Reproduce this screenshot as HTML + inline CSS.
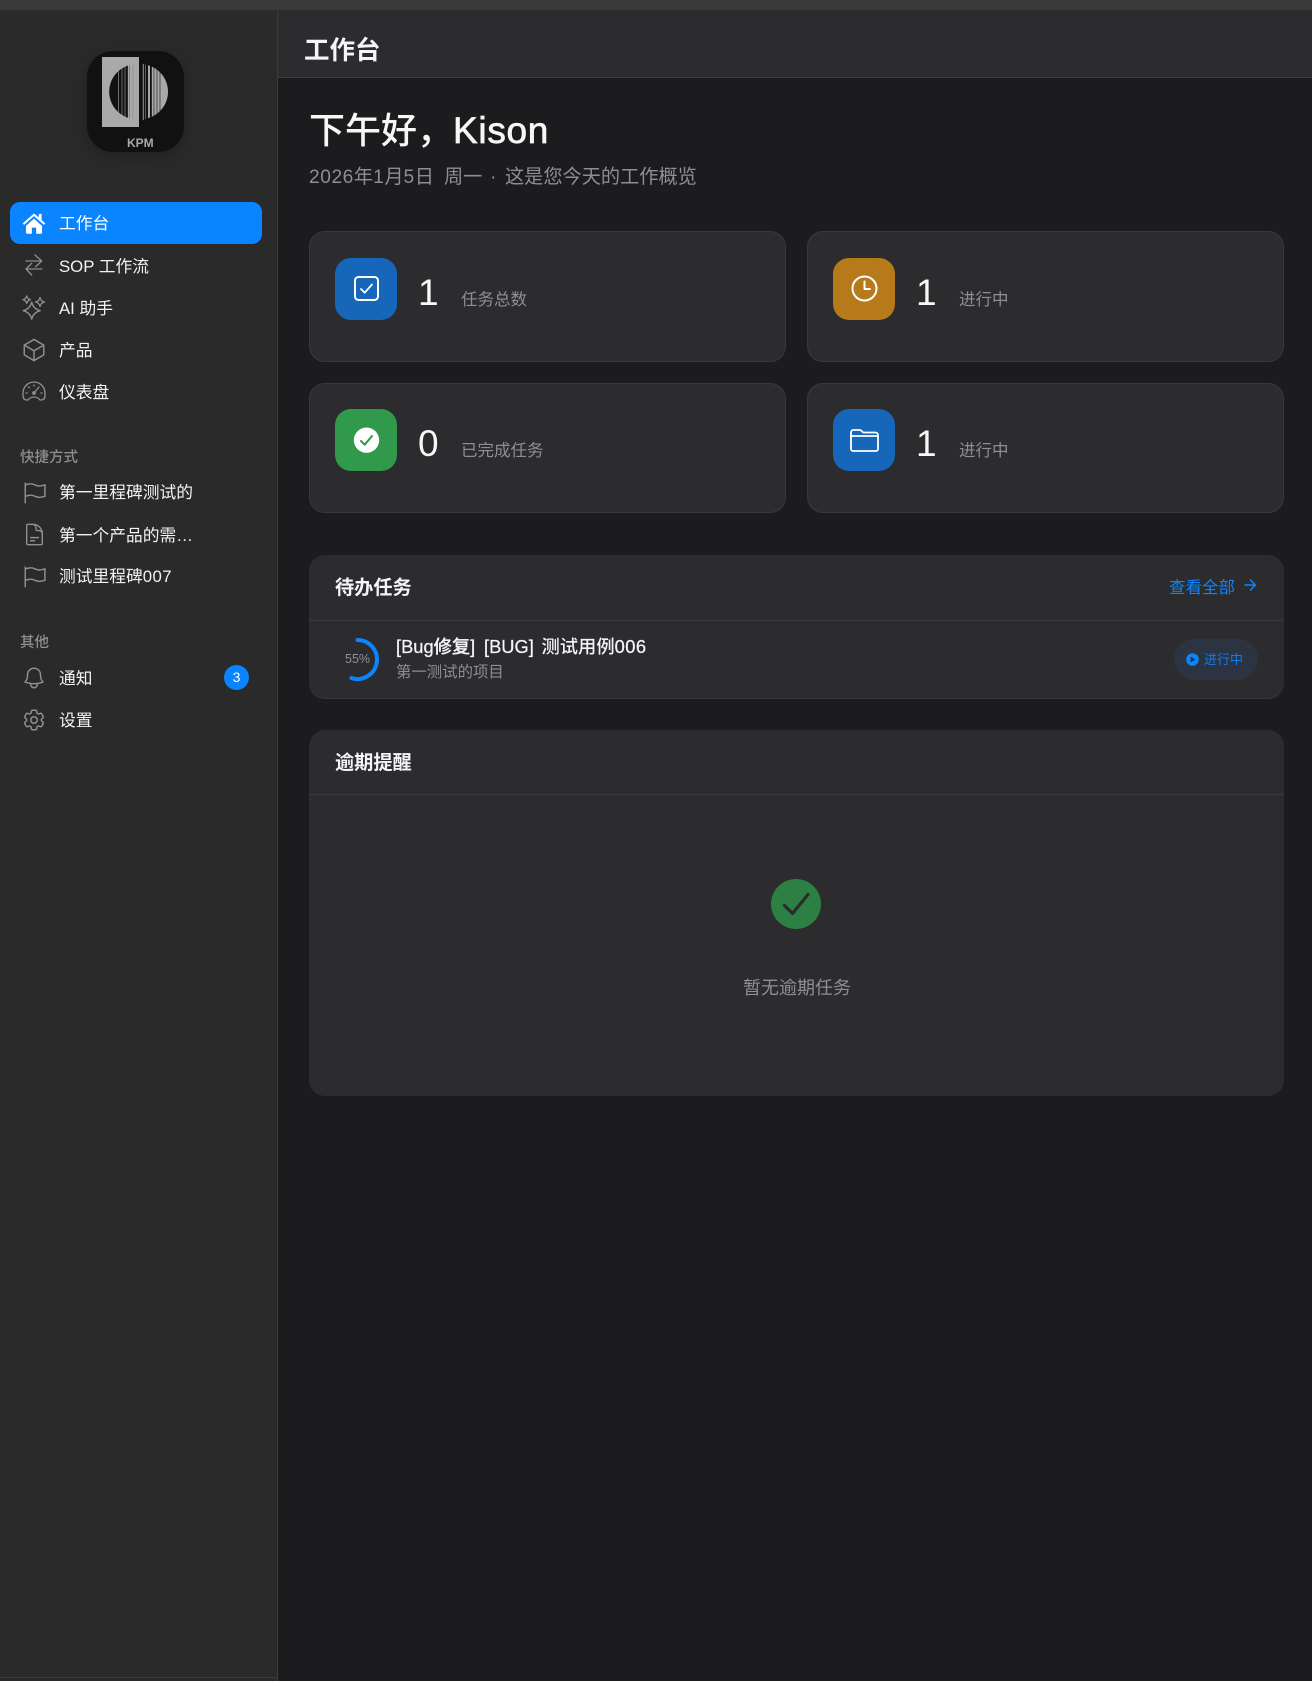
<!DOCTYPE html>
<html lang="zh"><head><meta charset="utf-8"><title>工作台</title>
<style>
*{box-sizing:border-box;margin:0;padding:0}
html,body{width:1312px;height:1681px;overflow:hidden;background:#1c1c1e}
body{position:relative;font-family:"Liberation Sans","Noto Sans CJK SC",sans-serif;color:#fff}
.a{position:absolute}
.t{position:absolute;white-space:nowrap;line-height:30px;height:30px}
.nav{font-size:16.75px;color:#f2f2f7;left:59px}
.sec{font-size:14.5px;color:#8e8e93;left:20px;font-weight:500}
.card{position:absolute;background:#2c2c2e;border:1px solid #39393b;border-radius:16px;width:477px;height:131px}
.tile{position:absolute;width:62px;height:62px;border-radius:16px}
.num{font-size:37px;color:#f8f8f8}
.lab{font-size:16.5px;color:#8e8e93}
svg.i{position:absolute;width:26px;height:26px;left:21px;fill:none;stroke:#8e8e93;stroke-width:1.35;stroke-linecap:round;stroke-linejoin:round}
svg.w{position:absolute;fill:none;stroke:#fff;stroke-width:2;stroke-linecap:round;stroke-linejoin:round}
.lat{letter-spacing:.45px}
.med{-webkit-text-stroke:.25px #f5f5f7}
</style></head><body>
<div class="a" style="left:0;top:0;width:1312px;height:10px;background:#3a3a3a"></div>
<div class="a" style="left:0;top:10px;width:278px;height:1671px;background:#2a2a2a;border-right:1px solid #3a3a3c"></div>
<div class="a" style="left:0;top:1677px;width:277px;height:1px;background:#3a3a3c"></div>
<div class="a" style="left:278px;top:10px;width:1034px;height:68px;background:#2c2c2e;border-bottom:1px solid #3f3f41"></div>

<div class="a" style="left:87px;top:51px;width:97px;height:101px;border-radius:26px;background:#111;box-shadow:0 4px 14px rgba(0,0,0,.25)"></div>
<svg class="a" style="left:87px;top:51px;filter:blur(.35px)" width="97" height="101" viewBox="0 0 97 101">
<defs>
<clipPath id="lh"><rect x="15" y="0" width="27.300" height="90"/></clipPath>
<clipPath id="rh"><rect x="53.500" y="0" width="30" height="90"/></clipPath>
</defs>
<rect x="15" y="6" width="37" height="70" fill="#a9a9a9"/>
<circle cx="49.700" cy="40.700" r="27.500" fill="#111" clip-path="url(#lh)"/>
<g clip-path="url(#lh)"><g stroke="#a9a9a9" stroke-width=".6"><path d="M31.500 13v56M35 13v56M38 13v56"/></g><path d="M41.500 13v56" stroke="#a9a9a9" stroke-width="1.300"/></g>
<path d="M46 13v56" stroke="#8d8d8d" stroke-width=".6"/>
<circle cx="53.500" cy="40.700" r="27.500" fill="#a9a9a9" clip-path="url(#rh)"/>
<rect x="53.500" y="12" width="5" height="58" fill="#111"/>
<rect x="55.800" y="13" width=".9" height="56" fill="#a9a9a9"/>
<rect x="59" y="13" width="2" height="56" fill="#111"/>
<rect x="63" y="13" width="1.800" height="56" fill="#111"/>
<g stroke="#111" stroke-width=".6"><path d="M67 13v56M70 13v56M73 13v56"/></g>
<text x="40" y="96" font-size="12" font-weight="700" fill="#a9a9a9" font-family="Liberation Sans">KPM</text>
</svg>

<div class="a" style="left:9.5px;top:202px;width:252px;height:42px;background:#0a84ff;border-radius:10px"></div>
<svg class="a" style="left:21px;top:210px" width="26" height="26" viewBox="0 0 24 24" fill="#fff"><path d="M12 3.200 1.600 12.400l1.200 1.300L12 5.600l9.200 8.100 1.200-1.300-3.400-3V3.600h-2.600v3.200z"/><path d="M4.600 14.600 12 8l7.400 6.600V21a.9.9 0 0 1-.9.9H14v-5.600h-4v5.600H5.500a.9.9 0 0 1-.9-.9z"/></svg>
<div class="t nav" style="top:209px;color:#fff">工作台</div>

<svg class="i" style="top:253px" viewBox="0 0 26 26"><path d="M5 8h15.700M14 2l6.700 6-6 5.700M5 16h15.700M10.700 10.300 5 16l5.700 6"/></svg>
<div class="t nav" style="top:252px">SOP 工作流</div>

<svg class="i" style="top:295px" viewBox="0 0 26 26"><path d="M10.700 7.200Q12.300 14 19.200 15.700 12.300 17.400 10.700 24.200 9.100 17.400 2.200 15.700 9.100 14 10.700 7.200Z"/><path d="M5.700 1Q6.300 4 9.400 4.700 6.300 5.400 5.700 8.400 5.100 5.400 2 4.700 5.100 4 5.700 1Z"/><path d="M19 2.500Q19.700 6.200 23.500 7 19.700 7.800 19 11.500 18.300 7.800 14.500 7 18.300 6.200 19 2.500Z"/></svg>
<div class="t nav" style="top:294px">AI 助手</div>

<svg class="i" style="top:336.500px" viewBox="0 0 24 24"><path d="m21 7.500-9-5.250L3 7.500m18 0-9 5.250m9-5.250v9l-9 5.250M3 7.500l9 5.250M3 7.500v9l9 5.250m0-9v9"/></svg>
<div class="t nav" style="top:336px">产品</div>

<svg class="i" style="top:379px" viewBox="0 0 26 26"><path d="M7 21H6C3.500 21 2 19.500 2 16.500V14A11 11 0 0 1 24 14V16.500C24 19.500 22.500 21 20 21H19C17.500 19 15.500 18 13 18C10.500 18 8.500 19 7 21Z"/><path d="M13 14 18 8M13 6v1M7.500 8l.8.8M5 14h1.200M20 14h1"/><circle cx="13" cy="14" r="1.200"/></svg>
<div class="t nav" style="top:378px">仪表盘</div>

<div class="t sec" style="top:443px">快捷方式</div>
<svg class="i" style="top:479.500px;left:22px" viewBox="0 0 24 24"><path d="M3 3v1.500M3 21v-6m0 0 2.770-.693a9 9 0 0 1 6.208.682l.108.054a9 9 0 0 0 6.086.710l3.114-.732a48.524 48.524 0 0 1-.005-10.499l-3.110.732a9 9 0 0 1-6.085-.711l-.108-.054a9 9 0 0 0-6.208-.682L3 4.500M3 15V4.500"/></svg>
<div class="t nav" style="top:478px">第一里程碑测试的</div>
<svg class="i" style="top:522px;left:22px;width:25px;height:25px" viewBox="0 0 24 24"><path d="M19.500 14.250v-2.625a3.375 3.375 0 0 0-3.375-3.375h-1.500A1.125 1.125 0 0 1 13.500 7.125v-1.500a3.375 3.375 0 0 0-3.375-3.375H8.250m0 12.750h7.500m-7.500 3H12M10.500 2.250H5.625c-.621 0-1.125.504-1.125 1.125v17.250c0 .621.504 1.125 1.125 1.125h12.750c.621 0 1.125-.504 1.125-1.125V11.250a9 9 0 0 0-9-9Z"/></svg>
<div class="t nav" style="top:521px">第一个产品的需…</div>
<svg class="i" style="top:563.500px;left:22px" viewBox="0 0 24 24"><path d="M3 3v1.500M3 21v-6m0 0 2.770-.693a9 9 0 0 1 6.208.682l.108.054a9 9 0 0 0 6.086.710l3.114-.732a48.524 48.524 0 0 1-.005-10.499l-3.110.732a9 9 0 0 1-6.085-.711l-.108-.054a9 9 0 0 0-6.208-.682L3 4.500M3 15V4.500"/></svg>
<div class="t nav" style="top:562px">测试里程碑<span class="lat">007</span></div>

<div class="t sec" style="top:628px">其他</div>
<svg class="i" style="top:664.500px" viewBox="0 0 24 24"><path d="M14.857 17.082a23.848 23.848 0 0 0 5.454-1.310A8.967 8.967 0 0 1 18 9.750V9A6 6 0 0 0 6 9v.750a8.967 8.967 0 0 1-2.312 6.022c1.733.640 3.560 1.085 5.455 1.310m5.714 0a24.255 24.255 0 0 1-5.714 0m5.714 0a3 3 0 1 1-5.714 0"/></svg>
<div class="t nav" style="top:664px">通知</div>
<div class="a" style="left:224px;top:664.500px;width:25px;height:25px;border-radius:50%;background:#0a84ff;font-size:14px;line-height:25px;text-align:center;font-weight:500">3</div>
<svg class="i" style="top:707px" viewBox="0 0 24 24"><path d="M9.594 3.940c.090-.542.560-.940 1.110-.940h2.593c.550 0 1.020.398 1.110.940l.213 1.281c.063.374.313.686.645.870.074.040.147.083.220.127.325.196.720.257 1.075.124l1.217-.456a1.125 1.125 0 0 1 1.370.490l1.296 2.247a1.125 1.125 0 0 1-.260 1.431l-1.003.827c-.293.241-.438.613-.430.992a7.723 7.723 0 0 1 0 .255c-.008.378.137.750.430.991l1.004.827c.424.350.534.955.260 1.430l-1.298 2.247a1.125 1.125 0 0 1-1.369.491l-1.217-.456c-.355-.133-.750-.072-1.076.124a6.470 6.470 0 0 1-.220.128c-.331.183-.581.495-.644.869l-.213 1.281c-.090.543-.560.940-1.110.940h-2.594c-.550 0-1.019-.398-1.110-.940l-.213-1.281c-.062-.374-.312-.686-.644-.870a6.520 6.520 0 0 1-.220-.127c-.325-.196-.720-.257-1.076-.124l-1.217.456a1.125 1.125 0 0 1-1.369-.490l-1.297-2.247a1.125 1.125 0 0 1 .260-1.431l1.004-.827c.292-.240.437-.613.430-.991a6.932 6.932 0 0 1 0-.255c.007-.380-.138-.751-.430-.992l-1.004-.827a1.125 1.125 0 0 1-.260-1.430l1.297-2.247a1.125 1.125 0 0 1 1.370-.491l1.216.456c.356.133.751.072 1.076-.124.072-.044.146-.086.220-.128.332-.183.582-.495.644-.869l.214-1.280Z"/><path d="M15 12a3 3 0 1 1-6 0 3 3 0 0 1 6 0Z"/></svg>
<div class="t nav" style="top:706px">设置</div>

<div class="t" style="left:304px;top:36px;font-size:25.5px;font-weight:600;line-height:30px;color:#f5f5f7">工作台</div>
<div class="t" style="left:309px;top:116px;font-size:36px;font-weight:500;line-height:30px;color:#f7f7f7">下午好，<span style="-webkit-text-stroke:.7px #f7f7f7;letter-spacing:.7px;font-size:37px">Kison</span></div>
<div class="t" style="left:309px;top:163px;font-size:19.2px;color:#8e8e93"><span style="letter-spacing:.55px">2026</span>年<span style="letter-spacing:.55px">1</span>月<span style="letter-spacing:.55px">5</span>日</div>
<div class="t" style="left:444px;top:163px;font-size:19.2px;color:#8e8e93">周一</div>
<div class="t" style="left:490px;top:163px;font-size:19.2px;color:#8e8e93">·</div>
<div class="t" style="left:505px;top:163px;font-size:19.2px;color:#8e8e93">这是您今天的工作概览</div>

<div class="card" style="left:309px;top:231px"></div>
<div class="tile" style="left:335px;top:258px;background:#1666ba"></div>
<svg class="w" style="left:353px;top:275px" width="27" height="27" viewBox="0 0 27 27"><rect x="2" y="2" width="23" height="23" rx="3.500" stroke-width="2"/><path d="M8 14l3.700 3.700L19 9.500" stroke-width="1.800"/></svg>
<div class="t num" style="left:418px;top:278px">1</div>
<div class="t lab" style="left:461px;top:285px">任务总数</div>

<div class="card" style="left:807px;top:231px"></div>
<div class="tile" style="left:833px;top:258px;background:#b67a1a"></div>
<svg class="w" style="left:851px;top:275px" width="27" height="27" viewBox="0 0 27 27"><circle cx="13.500" cy="13.500" r="12" stroke-width="2"/><path d="M13.500 6.500v7.500h5.500" stroke-width="2"/></svg>
<div class="t num" style="left:916px;top:278px">1</div>
<div class="t lab" style="left:959px;top:285px">进行中</div>

<div class="card" style="left:309px;top:383px;height:130px"></div>
<div class="tile" style="left:335px;top:409px;background:#30994b"></div>
<svg class="a" style="left:353px;top:427px" width="27" height="27" viewBox="0 0 27 27"><circle cx="13.500" cy="13.200" r="12.700" fill="#fff"/><path d="M8 14l3.700 3.700L19 9" fill="none" stroke="#30994b" stroke-width="2" stroke-linecap="round" stroke-linejoin="round"/></svg>
<div class="t num" style="left:418px;top:429px">0</div>
<div class="t lab" style="left:461px;top:436px">已完成任务</div>

<div class="card" style="left:807px;top:383px;height:130px"></div>
<div class="tile" style="left:833px;top:409px;background:#1666ba"></div>
<svg class="w" style="left:849px;top:427px" width="31" height="27" viewBox="0 0 31 27"><path d="M2 5.500A2.500 2.500 0 0 1 4.500 3h6c1 0 1.800.400 2.500 1.200l1 1.300h12.500A2.500 2.500 0 0 1 29 8v14a2 2 0 0 1-2 2H4a2 2 0 0 1-2-2z" stroke-width="1.800"/><path d="M2 9h27" stroke-width="1.800"/></svg>
<div class="t num" style="left:916px;top:429px">1</div>
<div class="t lab" style="left:959px;top:436px">进行中</div>

<div class="a" style="left:309px;top:555px;width:975px;height:144px;background:#2c2c2e;border-radius:16px;border-bottom:1px solid #38383a"></div>
<div class="a" style="left:309px;top:620px;width:975px;height:1px;background:#3a3a3c"></div>
<div class="t" style="left:335px;top:574px;font-size:19.2px;font-weight:600;color:#f5f5f7">待办任务</div>
<div class="t" style="left:1169px;top:573px;font-size:16.5px;color:#0a84ff">查看全部</div>
<svg class="a" style="left:1243px;top:576px" width="14" height="18" viewBox="0 0 14 18" fill="none" stroke="#0a84ff" stroke-width="1.500" stroke-linecap="round" stroke-linejoin="round"><path d="M2 9h10M7.500 4l4.800 5-4.800 5"/></svg>
<svg class="a" style="left:335px;top:637px" width="45" height="45" viewBox="0 0 45 45"><path d="M22.500 3A19.500 19.500 0 1 1 16.470 41.050" fill="none" stroke="#0a84ff" stroke-width="4" stroke-linecap="round"/></svg>
<div class="t" style="left:345px;top:644px;font-size:12.5px;color:#8e8e93">55%</div>
<div class="t med" style="left:396px;top:632px;font-size:18.3px;font-weight:500;color:#f5f5f7">[Bug修复]</div>
<div class="t med" style="left:484px;top:632px;font-size:18.3px;font-weight:500;color:#f5f5f7">[BUG]</div>
<div class="t" style="left:541.5px;top:632px;font-size:18.3px;font-weight:500;color:#f5f5f7">测试用例<span class="lat med">006</span></div>
<div class="t" style="left:396px;top:658px;font-size:15.4px;color:#8e8e93">第一测试的项目</div>
<div class="a" style="left:1174px;top:639px;width:84px;height:41px;border-radius:21px;background:#2b3440"></div>
<svg class="a" style="left:1186px;top:653px" width="13" height="13" viewBox="0 0 13 13"><circle cx="6.500" cy="6.500" r="6.300" fill="#0a84ff"/><path d="M4.600 3.500v6l4.800-3z" fill="#2b3440"/></svg>
<div class="t" style="left:1204px;top:645px;font-size:13px;color:#0a84ff;opacity:.9">进行中</div>

<div class="a" style="left:309px;top:730px;width:975px;height:366px;background:#2c2c2e;border-radius:16px"></div>
<div class="a" style="left:309px;top:794px;width:975px;height:1px;background:#3a3a3c"></div>
<div class="t" style="left:335px;top:749px;font-size:19.2px;font-weight:600;color:#f5f5f7">逾期提醒</div>
<svg class="a" style="left:771px;top:879px" width="50" height="50" viewBox="0 0 50 50"><circle cx="25" cy="25" r="25" fill="#2d8044"/><path d="M13.500 26.500l8 8L37 15.500" fill="none" stroke="#2c2c2e" stroke-width="3.200" stroke-linecap="round" stroke-linejoin="round"/></svg>
<div class="t" style="left:743px;top:973px;font-size:18px;color:#8e8e93">暂无逾期任务</div>
</body></html>
